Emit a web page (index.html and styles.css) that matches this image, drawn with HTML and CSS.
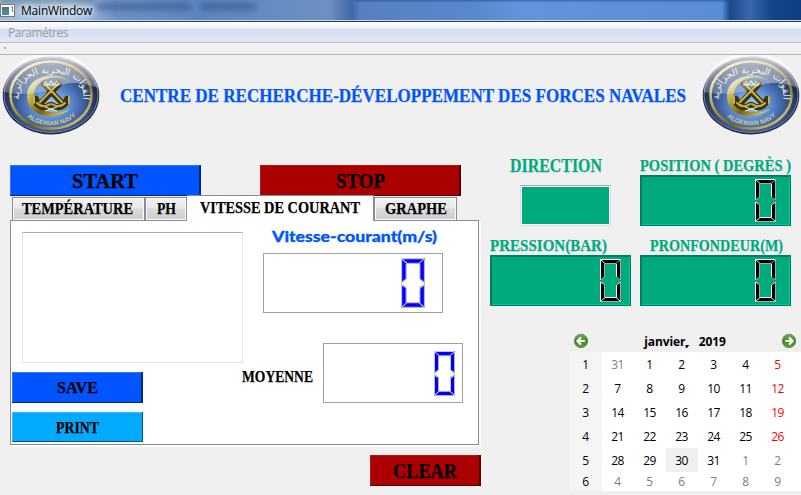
FILE: index.html
```
<!DOCTYPE html>
<html lang="fr">
<head>
<meta charset="utf-8">
<title>MainWindow</title>
<link rel="stylesheet" href="styles.css">
</head>
<body>
<svg class="defs" width="0" height="0" aria-hidden="true">
  <defs>
    <linearGradient id="gold" x1="0" y1="0" x2="1" y2="1">
      <stop offset="0" stop-color="#fffbd0"/><stop offset=".35" stop-color="#b9a542"/>
      <stop offset=".6" stop-color="#75651b"/><stop offset="1" stop-color="#f3e88d"/>
    </linearGradient>
    <radialGradient id="sea" cx=".5" cy=".62" r=".52">
      <stop offset="0" stop-color="#9fd0ff"/><stop offset=".4" stop-color="#5c8bd0"/>
      <stop offset=".75" stop-color="#34518f"/><stop offset="1" stop-color="#1c2749"/>
    </radialGradient>
    <linearGradient id="gloss" x1="0" y1="0" x2="0" y2="1">
      <stop offset="0" stop-color="#fff" stop-opacity=".8"/><stop offset="1" stop-color="#fff" stop-opacity=".22"/>
    </linearGradient>
    <linearGradient id="green" x1="0" y1="0" x2="0" y2="1">
      <stop offset="0" stop-color="#7dab62"/><stop offset=".5" stop-color="#3b8a1e"/><stop offset="1" stop-color="#5aa52f"/>
    </linearGradient>
    <symbol id="seal" viewBox="0 0 98 80">
      <ellipse cx="49" cy="40.5" rx="48.3" ry="39" fill="#202a44"/>
      <ellipse cx="49" cy="40" rx="47" ry="37.5" fill="url(#sea)" stroke="#77839f" stroke-width="1"/>
      <ellipse cx="49" cy="40" rx="40.500" ry="33.500" fill="none" stroke="url(#gold)" stroke-width="2.600"/>
      <path d="M68 27C56 15 25 20 25 41c0 21 29 27 44 12-13 9-37 4-37-12 0-18 22-23 36-14z" fill="url(#gold)"/>
      <path d="M57 29L39 48M42 29l18 19M35 49q6 6 13 1M50 50q7 5 13-1M34 44l3 6M65 44l-3 6" fill="none" stroke="#3d320e" stroke-width="6" stroke-linecap="round"/>
      <path d="M57 28L38 47M42 28l18 19M35 48q6 6 13 1M50 49q7 5 13-1M32 42v6M67 42v6" fill="none" stroke="#c9b14a" stroke-width="2" stroke-linecap="round"/>
      <path d="M43 52l12 4M55 52l-12 4M41 30h16M43 26l3 4 3-4 3 4 3-4" stroke="#eee4a2" stroke-width="1.200" fill="none"/>
      <path id="arc-top" d="M20 53C11 32 24 18 49 18s39 14 29 35" fill="none"/>
      <path id="arc-low" d="M20 54C29 76 69 76 79 53" fill="none"/>
      <text class="seal-ar"><textPath href="#arc-top" startOffset="50%" text-anchor="middle">القوات البحرية الجزائرية</textPath></text>
      <text class="seal-en"><textPath href="#arc-low" startOffset="50%" text-anchor="middle">ALGERIAN NAVY</textPath></text>
      <path d="M2 37A47 37.500 0 0 1 96 33C76 26 65 27 52 33 36 40 18 40 2 37z" fill="url(#gloss)"/>
    </symbol>
    <symbol id="zero" viewBox="0 0 21 43" preserveAspectRatio="none">
      <path d="M0 0H21L16.500 4.500H4.500zM0 0L4.500 4.500V18L0 21.500zM21 0V21.500L16.500 18V4.500zM0 22.500L4.500 25V38.500L0 43zM21 22.500V43L16.500 38.500V25zM0 43L4.500 38.500H16.500L21 43z" fill="currentColor"/>
      <path class="lo" d="M20.500 1V21L17 18.500M5 4.500H16L20.500.5M.5 21L4.500 18V5M20.500 23V42.500H.5M4.500 26V38"/>
      <path class="hi" d="M.5 21V.5H20.500M.5.5L5 4.500M16.500 18V5M.5 42.500V23L4.500 25.500M16.500 38.500V26L20.500 23M.5 42.500L5 38.500H16L20.500 42.500"/>
    </symbol>
  </defs>
</svg>

<div class="titlebar">
  <svg class="app-icon" viewBox="0 0 15 13"><rect x=".5" y=".5" width="14" height="12" fill="#fff" stroke="#777"/><rect x="2" y="3" width="7" height="8" fill="#4d8a91"/><path d="M2 3h7v3H2z" fill="#4a70a5"/><path d="M11 3h2M12.500 3v5" stroke="#548f78" fill="none"/></svg>
  <span>MainWindow</span>
  <i class="smudge s1"></i><i class="smudge s2"></i><i class="smudge s3"></i><i class="smudge s4"></i>
</div>
<div class="menubar">Paramétres</div>
<div class="toolbar"><i></i></div>

<header class="header">
  <svg class="seal"><use href="#seal"/></svg>
  <svg class="title" width="570" height="30"><text x="4" y="22" textLength="566" lengthAdjust="spacingAndGlyphs">CENTRE DE RECHERCHE-DÉVELOPPEMENT DES FORCES NAVALES</text></svg>
  <svg class="seal"><use href="#seal"/></svg>
</header>

<main class="main">
  <section class="left">
    <div class="actions">
      <button class="btn blue start"><svg width="66" height="22"><text x="-1" y="18" textLength="66" lengthAdjust="spacingAndGlyphs">START</text></svg></button>
      <button class="btn red stop"><svg width="50" height="22"><text x="0" y="18" textLength="49" lengthAdjust="spacingAndGlyphs">STOP</text></svg></button>
    </div>
    <div class="tabs">
      <div class="tab t1"><svg width="112" height="20"><text x="0" y="15" textLength="111" lengthAdjust="spacingAndGlyphs">TEMPÉRATURE</text></svg></div>
      <div class="tab t2"><svg width="20" height="20"><text x="0" y="15" textLength="19" lengthAdjust="spacingAndGlyphs">PH</text></svg></div>
      <div class="tab active"><svg width="161" height="20"><text x="0" y="15" textLength="160" lengthAdjust="spacingAndGlyphs">VITESSE DE COURANT</text></svg></div>
      <div class="tab t4"><svg width="63" height="20"><text x="0" y="15" textLength="62" lengthAdjust="spacingAndGlyphs">GRAPHE</text></svg></div>
    </div>
    <div class="panel">
      <div class="panel-left">
        <div class="view"></div>
        <button class="btn blue save"><svg width="42" height="20"><text x="0" y="15" textLength="41" lengthAdjust="spacingAndGlyphs">SAVE</text></svg></button>
        <button class="btn sky print"><svg width="44" height="20"><text x="0" y="16" textLength="43" lengthAdjust="spacingAndGlyphs">PRINT</text></svg></button>
      </div>
      <div class="panel-right">
        <svg class="speed" width="170" height="22"><text x="0" y="15" textLength="165" lengthAdjust="spacingAndGlyphs">Vitesse-courant(m/s)</text></svg>
        <div class="lcd plain l1"><svg><use href="#zero"/></svg></div>
        <div class="mean">
          <svg width="72" height="20"><text x="0" y="16" textLength="71" lengthAdjust="spacingAndGlyphs">MOYENNE</text></svg>
          <div class="lcd plain l2"><svg><use href="#zero"/></svg></div>
        </div>
      </div>
    </div>
    <button class="btn red clear"><svg width="65" height="22"><text x="0" y="18" textLength="64" lengthAdjust="spacingAndGlyphs">CLEAR</text></svg></button>
  </section>

  <section class="right">
    <div class="gauges">
      <div class="gauge dir">
        <svg width="93" height="20"><text class="big" x="0" y="17" textLength="92" lengthAdjust="spacingAndGlyphs">DIRECTION</text></svg>
        <div class="dirbox"></div>
      </div>
      <div class="gauge">
        <svg width="152" height="20"><text x="0" y="16" textLength="151" lengthAdjust="spacingAndGlyphs">POSITION ( DEGRÈS )</text></svg>
        <div class="lcd teal"><svg><use href="#zero"/></svg></div>
      </div>
      <div class="gauge">
        <svg width="118" height="20"><text x="0" y="16" textLength="117" lengthAdjust="spacingAndGlyphs">PRESSION(BAR)</text></svg>
        <div class="lcd teal pressure"><svg><use href="#zero"/></svg></div>
      </div>
      <div class="gauge depth">
        <svg width="134" height="20"><text x="0" y="16" textLength="133" lengthAdjust="spacingAndGlyphs">PRONFONDEUR(M)</text></svg>
        <div class="lcd teal"><svg><use href="#zero"/></svg></div>
      </div>
    </div>
    <div class="calendar">
      <div class="cal-head">
        <svg class="nav" viewBox="0 0 16 16"><circle cx="8" cy="8" r="6.700" fill="url(#green)" stroke="#4a7837" stroke-width=".7"/><path d="M12 8H5M8 4.500L4.500 8 8 11.500" fill="none" stroke="#fff" stroke-width="2.200"/></svg>
        <div class="month"><b>janvier,</b><i></i><b>2019</b></div>
        <svg class="nav" viewBox="0 0 16 16"><circle cx="8" cy="8" r="6.700" fill="url(#green)" stroke="#4a7837" stroke-width=".7"/><path d="M4 8h7M8 4.500L11.500 8 8 11.500" fill="none" stroke="#fff" stroke-width="2.200"/></svg>
      </div>
      <div class="days">
        <span class="wk">1</span><span class="off">31</span><span>1</span><span>2</span><span>3</span><span>4</span><span class="we">5</span>
        <span class="wk">2</span><span>7</span><span>8</span><span>9</span><span>10</span><span>11</span><span class="we">12</span>
        <span class="wk">3</span><span>14</span><span>15</span><span>16</span><span>17</span><span>18</span><span class="we">19</span>
        <span class="wk">4</span><span>21</span><span>22</span><span>23</span><span>24</span><span>25</span><span class="we">26</span>
        <span class="wk">5</span><span>28</span><span>29</span><span class="today">30</span><span>31</span><span class="off">1</span><span class="off">2</span>
        <span class="wk">6</span><span class="off">4</span><span class="off">5</span><span class="off">6</span><span class="off">7</span><span class="off">8</span><span class="off">9</span>
      </div>
    </div>
  </section>
</main>
</body>
</html>
```
FILE: styles.css
```
* { box-sizing: border-box; }
body {
  margin: 0;
  width: 801px;
  height: 495px;
  overflow: hidden;
  background: #f0f0f0;
  font: 12px "Open Sans", "Noto Sans", sans-serif;
  color: #000;
}
svg { display: block; flex: none; overflow: visible; }
.defs { position: absolute; }

/* window chrome */
.titlebar {
  position: relative;
  height: 22px;
  display: flex;
  align-items: center;
  gap: 6px;
  border-bottom: 1px solid #303d55;
  box-shadow: inset 0 -1px #c5d5ec;
  overflow: hidden;
  background: linear-gradient(90deg, #9fb9d8 0, #b5cbe6 70px, #6d92c6 115px, #5d86c0 200px, #6d90c1 330px, #3f68a8 352px, #5680c2 360px, #5a88ce 480px, #6593db 520px, #5b8cd6 722px, #1c488e 730px, #3967ac 750px, #164489 772px, #0f3d80 801px);
}
.titlebar span { position: relative; z-index: 1; letter-spacing: -.2px; line-height: 20px; text-shadow: 0 0 6px #fff, 0 0 8px #fff; }
.app-icon { width: 15px; height: 13px; z-index: 1; }
.smudge { position: absolute; filter: blur(3px); background: #2e4f80; opacity: .6; }
.s1 { left: 96px; top: 3px; width: 95px; height: 7px; }
.s2 { left: 200px; top: 3px; width: 56px; height: 7px; }
.s3 { left: 356px; top: -4px; width: 372px; height: 5px; background: #173b79; filter: blur(1px); }
.s4 { left: 0; top: -3px; width: 95px; height: 6px; background: #375f76; }
.menubar {
  height: 22px;
  padding-left: 8px;
  line-height: 22px;
  color: #9a9a9f;
  letter-spacing: -.5px;
  background: linear-gradient(#fff 0, #e9edf5 7px, #d5dcee 7px, #e2e8f7 20px, #b4b8cc 20px, #b4b8cc 21px, #fbfbfd 21px);
}
.toolbar { height: 11px; border-bottom: 1px solid #b2b2b2; padding: 3px 4px; }
.toolbar i { display: block; width: 2px; height: 2px; background: #aaa; box-shadow: -1px 1px #fff; }

/* lettering */
text { font: bold 17px "Liberation Serif", serif; fill: currentColor; stroke: currentColor; stroke-width: .25px; }
.header { display: flex; justify-content: space-between; padding: 0 1px 0 2px; height: 110px; color: #0055ff; }
.seal { width: 98px; height: 80px; }
.seal-ar { font: 9.500px "DejaVu Sans", sans-serif; fill: #efecc8; stroke: none; }
.seal-en { font: bold 6.500px "Liberation Sans", sans-serif; fill: #d2c98e; stroke: none; }
.title { margin-top: 25px; }
.title text { font-size: 19px; }

.main { display: flex; align-items: flex-start; }
.left { width: 471px; margin-left: 10px; }
.actions { display: flex; gap: 59px; }
.btn {
  display: flex;
  align-items: center;
  justify-content: center;
  height: 31px;
  padding: 0;
  border: 0;
  color: #000;
}
.blue { background: #0055ff; box-shadow: inset -2px -1px #002a80, inset 1px 1px #2e76ff; }
.red { background: #aa0000; box-shadow: inset -2px -1px #550000, inset 1px 1px #bd1212; }
.sky { background: #00aaff; box-shadow: inset -1px -1px #005580, inset 1px 1px #36bcff; }
.start { width: 191px; }
.stop { width: 201px; }
.start text, .stop text, .clear text { font-size: 20px; }

.tabs { display: flex; align-items: flex-end; position: relative; margin-top: -1px; height: 26px; padding-left: 2px; }
.tab {
  height: 24px;
  border: 1px solid #898c95;
  box-shadow: inset 0 0 0 1px #fafafa;
  background: linear-gradient(#f2f2f2, #e9e9e9 45%, #dadada 50%, #cfcfcf);
  padding: 1px 0 0 9px;
}
.t1 { width: 133px; }
.t2 { width: 42px; padding-left: 11px; }
.t4 { width: 83px; padding-left: 10px; }
.tab.active { width: 187px; height: 26px; background: #fff; border-bottom: 0; border-left: 0; padding: 2px 0 0 13px; z-index: 1; box-shadow: none; }
.panel {
  display: flex;
  width: 469px;
  height: 225px;
  margin-top: -1px;
  border: 1px solid #898c95;
  background: #fff;
  box-shadow: 2px 2px #fbfbfb;
}
.panel-left { width: 232px; padding-left: 1px; flex: none; }
.view { width: 221px; height: 131px; margin: 11px 0 9px 10px; border: 1px solid #e0e3ea; border-top-color: #abadb3; }
.save, .print { width: 131px; }
.print { margin-top: 9px; height: 30px; }
.panel-right { padding-top: 6px; }
.speed { margin-left: 29px; color: #0055ff; }
.speed text { font: 900 15px Lato, sans-serif; stroke-width: .3px; }
.lcd { display: flex; align-items: center; justify-content: flex-end; }
.plain { border: 1px solid #a0a0a0; color: #0000ff; --hi: #c4c4dc; --lo: #b4b4c8; }
.plain .hi, .plain .lo { stroke-width: .8px; }
.l1 { width: 180px; height: 60px; margin: 4px 0 0 20px; padding-right: 17px; }
.l1 svg { width: 24px; height: 50px; }
.l2 { width: 140px; height: 60px; padding-right: 7px; }
.l2 svg { width: 21px; height: 45px; }
.mean { display: flex; align-items: center; margin-top: 30px; gap: 9px; }
.mean > svg { margin: 6px 0 0 -1px; }
.clear { width: 111px; margin: 10px 0 0 360px; }
.hi { fill: none; stroke: var(--hi); }
.lo { fill: none; stroke: var(--lo); }

/* gauges */
.right { margin-left: 9px; width: 311px; }
.gauges { display: grid; grid-template-columns: 141px 151px; gap: 0 9px; color: #00aa7f; margin-top: -10px; }
.gauge { height: 80px; }
.gauge .big { font-size: 19.500px; }
.dir > svg { margin-left: 20px; }
.depth > svg { margin-left: 10px; }
.dirbox { width: 91px; height: 41px; margin: 10px 0 0 30px; background: #00aa7f; border: 1px solid #d9dfe5; border-top-color: #9fa9aa; box-shadow: inset 0 0 0 1px #fff; }
.teal { height: 51px; background: #00aa7f; border: 1px solid #007f5f; box-shadow: inset 1px 1px #00805f, inset -1px -1px #00c796; color: #000; --hi: #f8f8f8; --lo: #a7a7a7; padding-right: 14px; }
.teal svg { width: 21px; height: 43px; }
.pressure { padding-right: 9px; }

/* calendar */
.calendar { width: 231px; margin: 13px 0 0 80px; }
.cal-head { display: flex; align-items: center; justify-content: space-between; height: 24px; padding: 2px 4px 0 3px; }
.nav { width: 16px; height: 16px; }
.month { display: flex; font-size: 12px; letter-spacing: -.1px; }
.month i { width: 5px; height: 3px; margin: 12px 9px 0 -4px; background: #000; clip-path: polygon(0 0, 100% 0, 50% 100%); }
.days { display: grid; grid-template-columns: repeat(7, 32px); grid-template-rows: repeat(5, 24px) 19px; background: #fff; }
.days span { display: flex; align-items: center; justify-content: center; letter-spacing: -.5px; padding-right: 1px; }
.days .wk { background: #f5f5f5; }
.days .off { color: #808080; }
.days .we { color: #f00; }
.days .today { background: #f0f0f0; }
```
